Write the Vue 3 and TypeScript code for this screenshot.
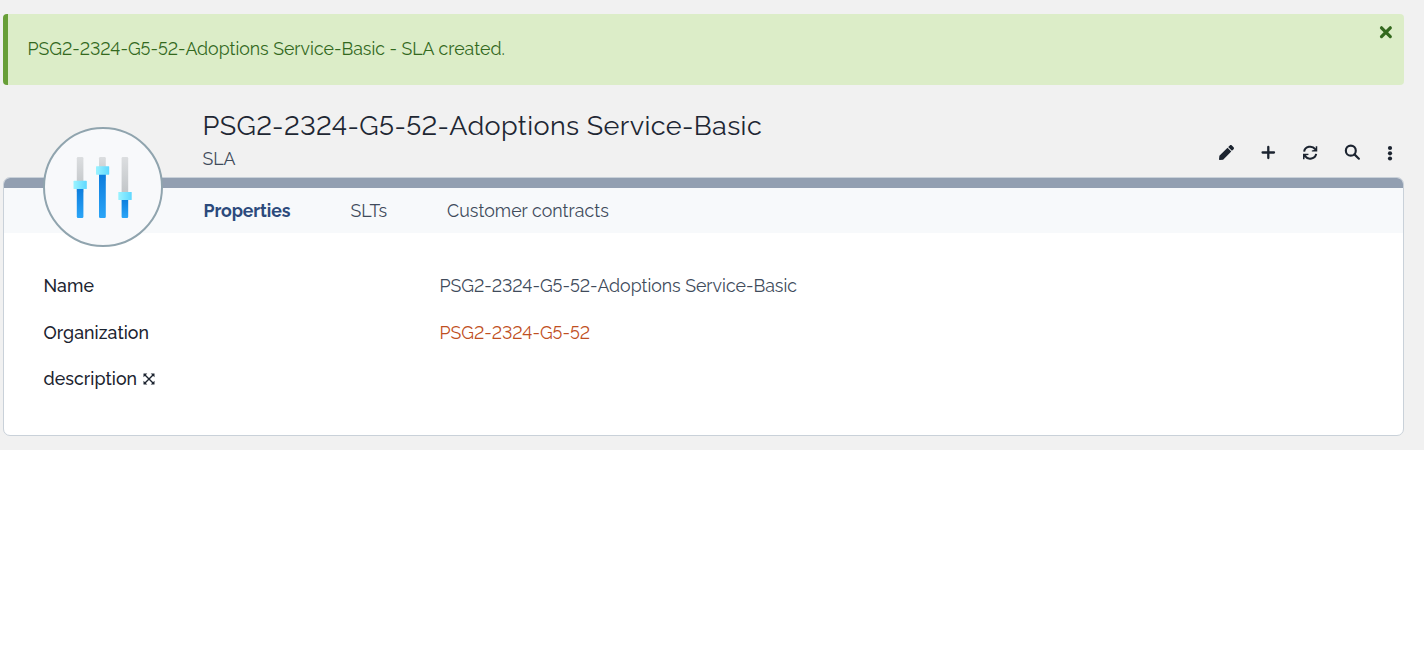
<script setup lang="ts">
import { ref } from 'vue'

interface Tab {
  id: string
  label: string
}

const serviceName = 'PSG2-2324-G5-52-Adoptions Service-Basic'
const organization = 'PSG2-2324-G5-52'
const tabs: Tab[] = [
  { id: 'properties', label: 'Properties' },
  { id: 'slts', label: 'SLTs' },
  { id: 'contracts', label: 'Customer contracts' },
]
const activeTab = ref('properties')
</script>

<template>
  <main class="page">
    <div class="banner">
      <span class="banner-text">{{ serviceName }} - SLA created.</span>
      <svg class="close" viewBox="0 0 14 14"><path d="M2.5 2.8 11.3 11.6M11.3 2.8 2.5 11.6" /></svg>
    </div>

    <header class="header">
      <div class="titles">
        <h1 class="title">{{ serviceName }}</h1>
        <div class="subtitle">SLA</div>
      </div>
      <div class="actions">
        <svg width="15" height="15" viewBox="0 0 512 512"><path d="M290.74 93.24l128.02 128.02-277.99 277.99-114.14 12.6C11.35 513.54-1.56 500.62.14 485.34l12.7-114.22 277.9-277.88zm207.2-19.06l-60.11-60.11c-18.75-18.75-49.16-18.75-67.91 0l-56.55 56.55 128.02 128.02 56.55-56.55c18.75-18.76 18.75-49.16 0-67.91z" /></svg>
        <svg width="15" height="15" viewBox="0 0 15 15"><path class="line" d="M7.3 1.9V13.1M1.6 7.5H13" /></svg>
        <svg width="15" height="15" viewBox="0 0 16 16">
          <path class="arc" d="M1.2 7A6.5 6.1 0 0 1 13 4.5M14 9.4A6.5 6.1 0 0 1 2.2 11.9" />
          <path d="M15.2 1.2V7H9.4V5.8L11.6 5.4 13.6 3.2V1.2ZM0 15.2V9.4H5.8V10.6L3.6 11 1.6 13.2V15.2Z" />
        </svg>
        <svg width="15" height="15" viewBox="0 0 16 16"><circle class="line" cx="6.2" cy="6" r="5.3" /><path class="line" d="M10.1 10 14.8 14.6" /></svg>
        <svg width="6" height="15" viewBox="0 0 6 15"><circle cx="3" cy="3" r="2.1" /><circle cx="3" cy="8.3" r="2.1" /><circle cx="3" cy="13.5" r="2.1" /></svg>
      </div>
    </header>

    <section class="panel">
      <div class="bar"></div>
      <div class="medallion">
        <svg width="116" height="116" viewBox="45 129 116 116">
          <defs>
            <linearGradient id="track" x1="0" y1="0" x2="0" y2="1"><stop offset="0" stop-color="#dcdee0" /><stop offset="1" stop-color="#bdc1c4" /></linearGradient>
            <linearGradient id="level" x1="0" y1="0" x2="0" y2="1"><stop offset="0" stop-color="#0b7bdc" /><stop offset="1" stop-color="#2ba5f7" /></linearGradient>
            <linearGradient id="knob"><stop offset="0" stop-color="#9bf3ff" /><stop offset="1" stop-color="#5fd8ff" /></linearGradient>
          </defs>
          <rect x="76.8" y="157" width="6.6" height="36" rx="1.2" fill="url(#track)" />
          <rect x="99" y="157" width="6.8" height="24" rx="1.2" fill="url(#track)" />
          <rect x="121.6" y="157" width="6.6" height="43" rx="1.2" fill="url(#track)" />
          <path d="M76.8 187h6.6v29.8q0 1.2-1.2 1.2H78q-1.2 0-1.2-1.2z" fill="url(#level)" />
          <path d="M99 173h6.8v43.8q0 1.2-1.2 1.2h-4.4q-1.2 0-1.2-1.2z" fill="url(#level)" />
          <path d="M121.6 198h6.6v18.8q0 1.2-1.2 1.2h-4.2q-1.2 0-1.2-1.2z" fill="url(#level)" />
          <rect x="73.5" y="180.8" width="13.3" height="8.2" rx=".6" fill="url(#knob)" />
          <rect x="96" y="166.2" width="13.2" height="8.5" rx=".6" fill="url(#knob)" />
          <rect x="118.3" y="192" width="13.4" height="8" rx=".6" fill="url(#knob)" />
        </svg>
      </div>
      <nav class="tabs">
        <a v-for="tab in tabs" :key="tab.id" :class="['tab', tab.id, { active: tab.id === activeTab }]" @click="activeTab = tab.id">{{ tab.label }}</a>
      </nav>
      <dl class="fields">
        <dt>Name</dt>
        <dd>{{ serviceName }}</dd>
        <dt>Organization</dt>
        <dd><a class="link">{{ organization }}</a></dd>
        <dt>
          <span>description</span>
          <svg class="expand" viewBox="0 0 12 12"><path class="cross" d="M2 2 10 10M10 2 2 10" /><path d="M.5.5h3.8l-3.8 3.8ZM11.5.5v3.8l-3.8-3.8ZM.5 11.5v-3.8l3.8 3.8ZM11.5 11.5h-3.8l3.8-3.8Z" /></svg>
        </dt>
        <dd></dd>
      </dl>
    </section>
  </main>
</template>

<style>
body {
  margin: 0;
  background: #fff;
}
</style>

<style scoped>
.page {
  box-sizing: border-box;
  height: 450px;
  padding: 14px 20px 0 3px;
  background: #f1f1f1;
  color: #404b5b;
  font-family: Raleway, Lato, sans-serif;
  font-size: 17.73px;
  font-variant-numeric: lining-nums;
  line-height: 24px;
  white-space: nowrap;
}
.banner {
  box-sizing: border-box;
  display: flex;
  justify-content: space-between;
  height: 71px;
  padding: 11px 11px 0 19.5px;
  border-left: 5px solid #689f38;
  border-radius: 4px;
  background: #dcedc8;
  color: #33691e;
}
.banner-text {
  margin-top: 12px;
}
.close {
  width: 14px;
  height: 14px;
  stroke: #33691e;
  stroke-width: 3.2;
  stroke-linecap: round;
}
.header {
  display: flex;
  justify-content: space-between;
  height: 92px;
  padding-left: 199.5px;
}
.titles {
  padding-top: 23px;
}
.title {
  margin: 0;
  color: #1e2733;
  font-size: 27px;
  font-weight: 400;
  letter-spacing: 0.38px;
  line-height: 36px;
}
.subtitle {
  margin-top: 3px;
  width: max-content;
}
.actions {
  display: flex;
  gap: 27px;
  padding-top: 60px;
  padding-right: 11px;
}
.actions svg {
  overflow: visible;
  fill: #1c2430;
}
.actions .line {
  fill: none;
  stroke: #1c2430;
  stroke-width: 2.3;
  stroke-linecap: round;
}
.actions .arc {
  fill: none;
  stroke: #1c2430;
  stroke-width: 2.2;
}
.panel {
  position: relative;
  box-sizing: border-box;
  height: 259px;
  border: 1px solid #c9d1d9;
  border-radius: 7px;
  background: #fff;
}
.bar {
  height: 10px;
  border-radius: 6px 6px 0 0;
  background: #929fb1;
}
.medallion {
  position: absolute;
  top: -51px;
  left: 39px;
  box-sizing: border-box;
  width: 120px;
  height: 120px;
  overflow: hidden;
  border: 2px solid #90a4ae;
  border-radius: 50%;
  background: #f8f9fb;
}
.medallion svg {
  display: block;
}
.tabs {
  display: flex;
  box-sizing: border-box;
  height: 45px;
  padding: 11px 0 0 199.5px;
  background: #f7f9fb;
}
.tab {
  cursor: pointer;
}
.properties {
  width: 147px;
}
.slts {
  width: 96.6px;
}
.contracts {
  letter-spacing: 0.04px;
}
.active {
  color: #2c4a7c;
  font-weight: 700;
  letter-spacing: -0.1px;
}
.fields {
  display: grid;
  grid-template-columns: 396px 1fr;
  grid-auto-rows: 46.5px;
  margin: 0;
  padding: 41px 40px 0 39.5px;
}
.fields dt {
  color: #1c2430;
  font-weight: 500;
  letter-spacing: 0.07px;
}
.fields dd {
  margin: 0;
}
.link {
  color: #bf4f22;
}
.expand {
  width: 12px;
  height: 12px;
  margin-left: 6px;
  fill: #1c2430;
}
.cross {
  stroke: #1c2430;
  stroke-width: 1.4;
}
</style>
